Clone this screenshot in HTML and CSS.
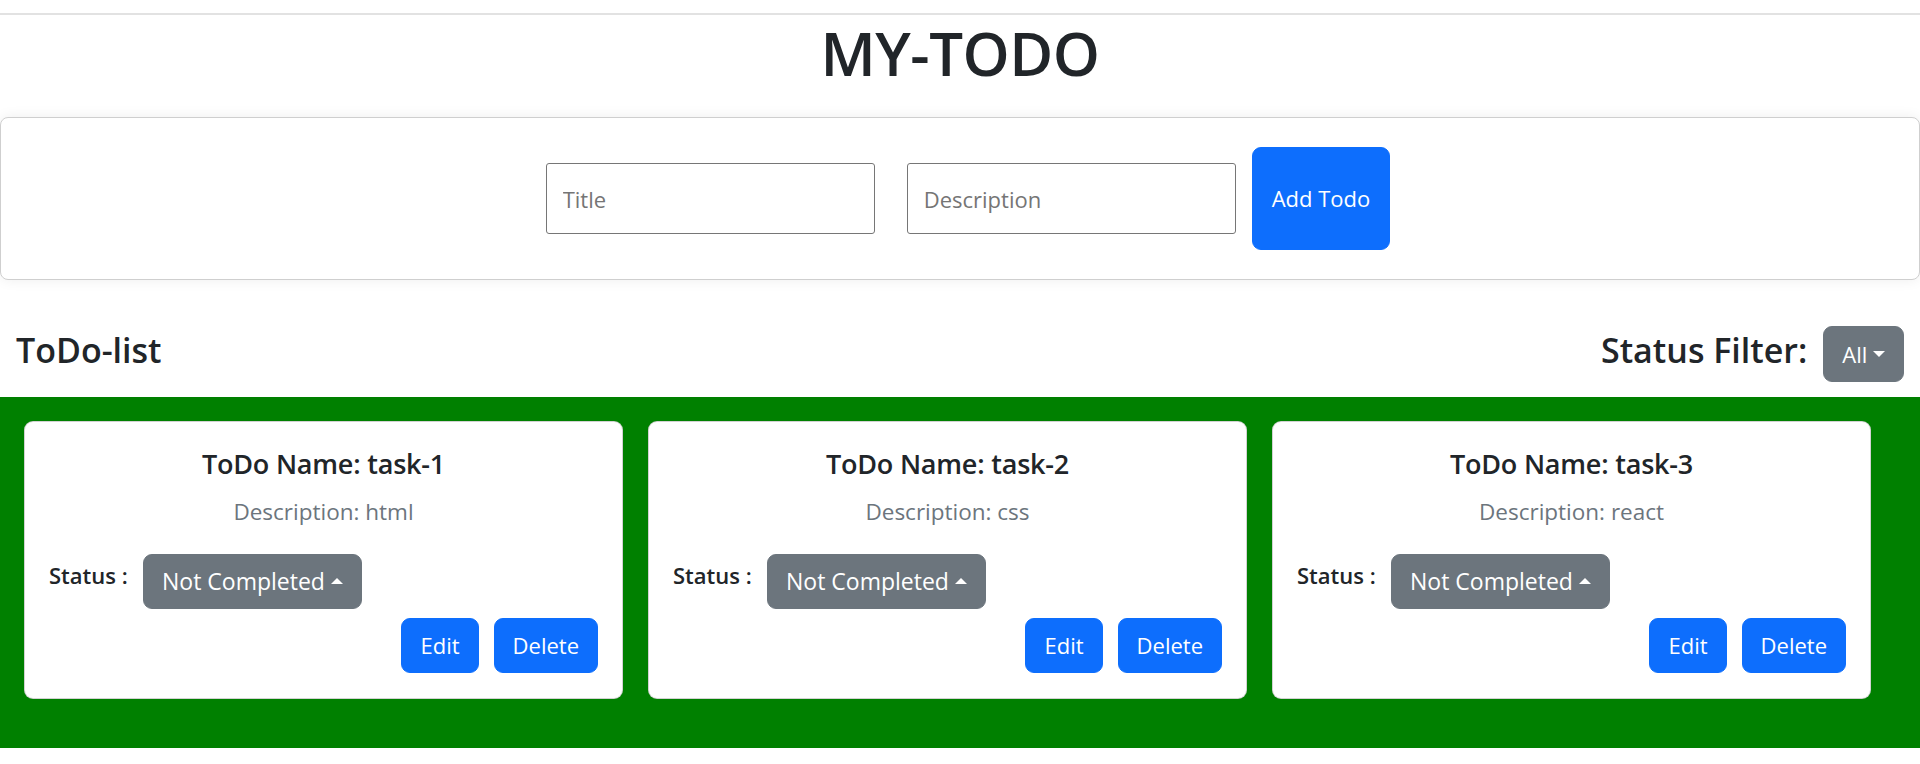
FILE: index.html
```html
<!DOCTYPE html>
<html lang="en">
<head>
<meta charset="utf-8">
<title>MY-TODO</title>
<link rel="stylesheet" href="styles.css">
</head>
<body>
  <hr class="top-rule">
  <h1 class="app-title">MY-TODO</h1>

  <div class="add-card">
    <form class="add-form">
      <input class="field" type="text" placeholder="Title">
      <input class="field" type="text" placeholder="Description">
      <button type="button" class="btn btn-blue btn-add">Add Todo</button>
    </form>
  </div>

  <div class="list-header">
    <h4 class="section-title">ToDo-list</h4>
    <div class="filter">
      <h4 class="section-title">Status Filter:</h4>
      <button type="button" class="btn btn-gray caret-down">All</button>
    </div>
  </div>

  <div class="todo-area">
    <div class="todo-card">
      <h5 class="todo-name">ToDo Name: task-1</h5>
      <p class="todo-desc">Description: html</p>
      <div class="status-row">
        <span class="status-label">Status :</span>
        <button type="button" class="btn btn-gray btn-status caret-up">Not Completed</button>
      </div>
      <div class="actions">
        <button type="button" class="btn btn-blue">Edit</button>
        <button type="button" class="btn btn-blue">Delete</button>
      </div>
    </div>
    <div class="todo-card">
      <h5 class="todo-name">ToDo Name: task-2</h5>
      <p class="todo-desc">Description: css</p>
      <div class="status-row">
        <span class="status-label">Status :</span>
        <button type="button" class="btn btn-gray btn-status caret-up">Not Completed</button>
      </div>
      <div class="actions">
        <button type="button" class="btn btn-blue">Edit</button>
        <button type="button" class="btn btn-blue">Delete</button>
      </div>
    </div>
    <div class="todo-card">
      <h5 class="todo-name">ToDo Name: task-3</h5>
      <p class="todo-desc">Description: react</p>
      <div class="status-row">
        <span class="status-label">Status :</span>
        <button type="button" class="btn btn-gray btn-status caret-up">Not Completed</button>
      </div>
      <div class="actions">
        <button type="button" class="btn btn-blue">Edit</button>
        <button type="button" class="btn btn-blue">Delete</button>
      </div>
    </div>
  </div>
</body>
</html>
```

FILE: styles.css
```css
* { box-sizing: border-box; }

html, body {
  margin: 0;
  padding: 0;
  background: #ffffff;
}

body {
  font-family: "Open Sans", "Noto Sans", sans-serif;
  font-size: 24px;
  line-height: 1.5;
  color: #212529;
  height: 764px;
  overflow: hidden;
}

.top-rule {
  margin: 13px 0 0;
  border: 0;
  border-top: 2px solid #e2e2e2;
  height: 0;
}

.app-title {
  margin: 2px 0 0;
  text-align: center;
  font-size: 60px;
  font-weight: 600;
  line-height: 72px;
  letter-spacing: -0.5px;
}

.add-card {
  margin-top: 28px;
  border: 1px solid #cfcfcf;
  border-radius: 8px;
  background: #fff;
  box-shadow: 0 0 14px rgba(0, 0, 0, 0.07);
  padding: 29px 0;
}

.add-form {
  display: flex;
  justify-content: center;
  align-items: center;
  margin: 0;
}

.field {
  width: 329px;
  height: 71px;
  margin: 0 16px;
  padding: 0 16px;
  border: 1px solid #767676;
  border-radius: 3px;
  font-family: inherit;
  font-size: 22px;
  color: #212529;
  background: #fff;
}

.field::placeholder {
  color: #757575;
}

.btn {
  display: inline-block;
  font-family: inherit;
  font-size: 22px;
  font-weight: 400;
  line-height: 35px;
  padding: 9px 18px;
  border: 1px solid transparent;
  border-radius: 9px;
  color: #fff;
  cursor: pointer;
  white-space: nowrap;
}

.btn-blue {
  background: #0d6efd;
  border-color: #0d6efd;
}

.btn-gray {
  background: #6c757d;
  border-color: #6c757d;
}

.btn-add {
  height: 103px;
  padding: 0 19px;
}

.btn-status {
  font-size: 23px;
}

.caret-down::after,
.caret-up::after {
  content: "";
  display: inline-block;
  margin-left: 0.255em;
  vertical-align: 0.255em;
  border-left: 0.3em solid transparent;
  border-right: 0.3em solid transparent;
}

.caret-down::after {
  border-top: 0.3em solid #fff;
  border-bottom: 0;
}

.caret-up::after {
  border-bottom: 0.3em solid #fff;
  border-top: 0;
}

.caret-down {
  line-height: 36px;
}

.list-header {
  display: flex;
  justify-content: space-between;
  align-items: baseline;
  margin: 46px 0 15px;
  padding: 0 16px;
}

.section-title {
  margin: 0;
  font-size: 34px;
  font-weight: 600;
  line-height: 1.2;
}

.filter {
  display: flex;
  align-items: baseline;
  gap: 16px;
}

.todo-area {
  background: #008000;
  display: grid;
  grid-template-columns: repeat(3, 599px);
  column-gap: 25px;
  padding: 24px 49px 49px 24px;
}

.todo-card {
  background: #fff;
  border: 1px solid rgba(0, 0, 0, 0.175);
  border-radius: 9px;
  padding: 24px;
  height: 278px;
  display: flex;
  flex-direction: column;
}

.todo-name {
  margin: 0 0 12px;
  text-align: center;
  font-size: 27px;
  font-weight: 600;
  line-height: 36px;
  letter-spacing: -0.2px;
}

.todo-desc {
  margin: 0 0 24px;
  text-align: center;
  color: #6c757d;
  font-size: 22.5px;
  line-height: 36px;
}

.status-row {
  display: flex;
  align-items: flex-start;
  gap: 14px;
}

.status-label {
  font-size: 22px;
  font-weight: 600;
  line-height: 36px;
  padding-top: 3px;
  width: 80px;
}

.actions {
  display: flex;
  justify-content: flex-end;
  gap: 15px;
  margin-top: 9px;
}
```
